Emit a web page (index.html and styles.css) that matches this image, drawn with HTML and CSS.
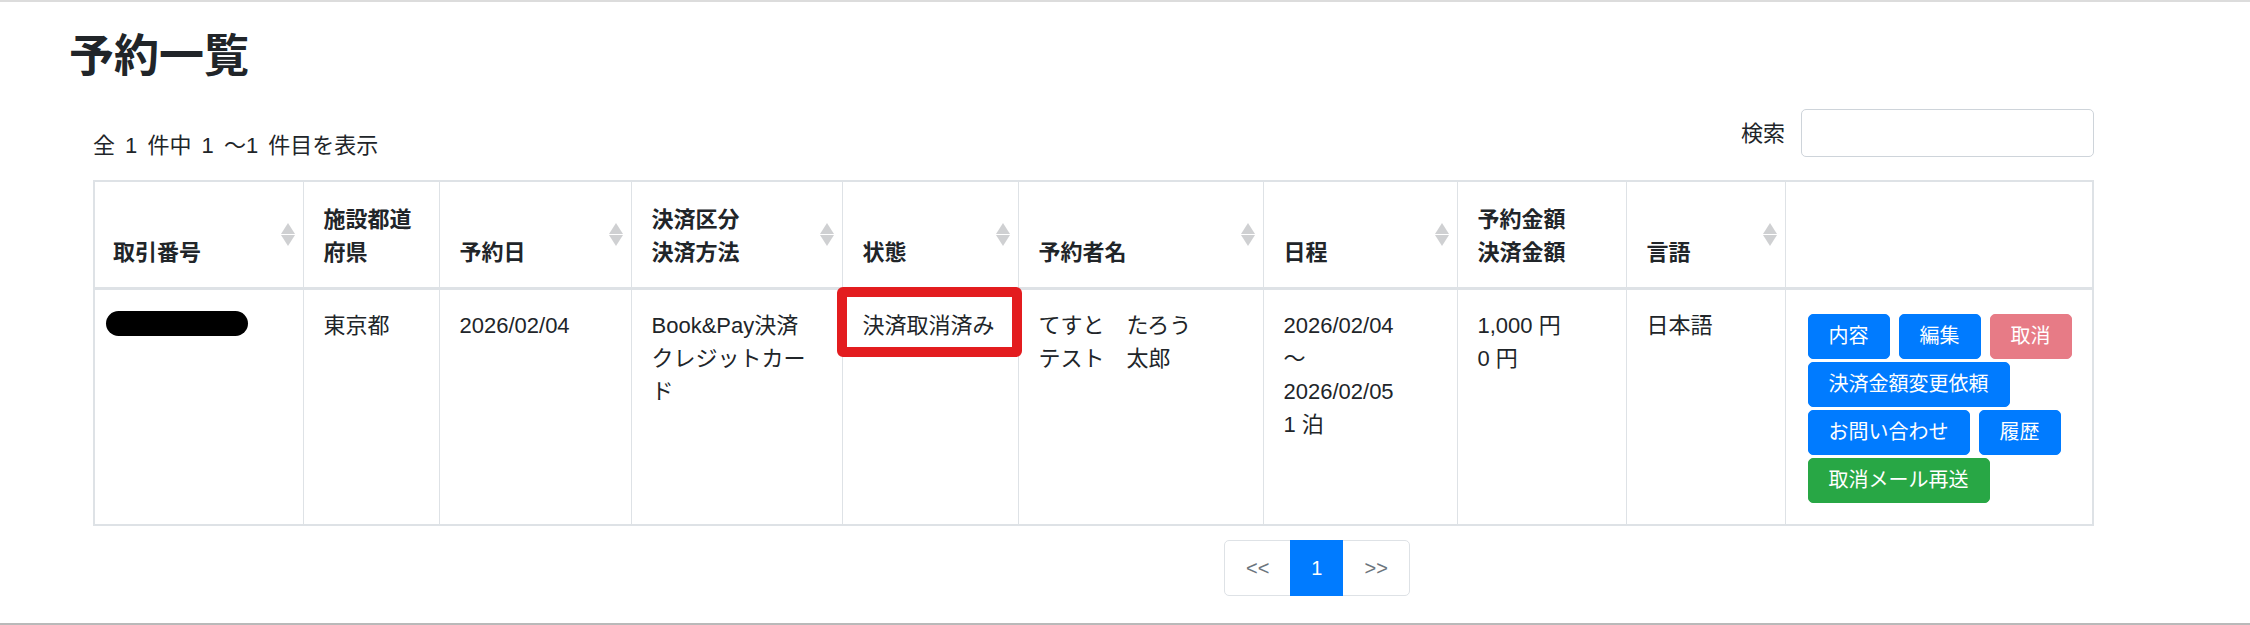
FILE: index.html
```html
<!DOCTYPE html>
<html lang="ja">
<head>
    <meta charset="UTF-8">
    <meta name="viewport" content="width=device-width, initial-scale=1.0">
    <title>予約一覧</title>
    <link rel="stylesheet" href="styles.css">
</head>
<body>

    <div class="page">
        <h2 class="page_title">予約一覧</h2>

        <div class="dt_wrap">
            <div class="dt_top">
                <div class="dt_info">全 1 件中 1 ～1 件目を表示</div>
                <label class="dt_search">検索<input type="search" class="search_input"></label>
            </div>

            <table class="res_table">
                <colgroup>
                    <col class="c1"><col class="c2"><col class="c3"><col class="c4"><col class="c5">
                    <col class="c6"><col class="c7"><col class="c8"><col class="c9"><col class="c10">
                </colgroup>
                <thead>
                    <tr>
                        <th class="sorting first">取引番号</th>
                        <th>施設都道府県</th>
                        <th class="sorting">予約日</th>
                        <th class="sorting">決済区分<br>決済方法</th>
                        <th class="sorting">状態</th>
                        <th class="sorting">予約者名</th>
                        <th class="sorting">日程</th>
                        <th>予約金額<br>決済金額</th>
                        <th class="sorting">言語</th>
                        <th></th>
                    </tr>
                </thead>
                <tbody>
                    <tr>
                        <td class="first"><span class="masked"></span></td>
                        <td>東京都</td>
                        <td>2026/02/04</td>
                        <td>Book&amp;Pay決済<br>クレジットカー<br>ド</td>
                        <td class="status_cell">決済取消済み<span class="mark_box"></span></td>
                        <td>てすと　たろう<br>テスト　太郎</td>
                        <td>2026/02/04<br>～<br>2026/02/05<br>1 泊</td>
                        <td>1,000 円<br>0 円</td>
                        <td>日本語</td>
                        <td>
                            <div class="actions">
                                <button class="btn btn_blue">内容</button>
                                <button class="btn btn_blue">編集</button>
                                <button class="btn btn_red" disabled>取消</button>
                                <button class="btn btn_blue">決済金額変更依頼</button>
                                <button class="btn btn_blue">お問い合わせ</button>
                                <button class="btn btn_blue">履歴</button>
                                <button class="btn btn_green">取消メール再送</button>
                            </div>
                        </td>
                    </tr>
                </tbody>
            </table>

            <div class="dt_bottom">
                <ul class="pager">
                    <li class="pg_item disabled"><span class="pg_link pg_arrow">&lt;&lt;</span></li>
                    <li class="pg_item active"><span class="pg_link">1</span></li>
                    <li class="pg_item disabled"><span class="pg_link pg_arrow">&gt;&gt;</span></li>
                </ul>
            </div>
        </div>
    </div>

</body>
</html>
```

FILE: styles.css
```css
body{
    margin: 0;
    padding: 0;
    font-family: "Liberation Sans", "Noto Sans CJK JP", sans-serif;
    color: #212529;
    background-color: #fff;
    overflow: hidden;
}

.page{
    height: 625px;
    box-sizing: border-box;
    border-top: 2px solid #dcdcdc;
    border-bottom: 2px solid #b9b9b9;
    padding: 28px 0 0 69px;
}

.page_title{
    margin: 0;
    font-size: 45px;
    line-height: 1.2;
    font-weight: bold;
}

.dt_wrap{
    margin-left: 24px;
    width: 2001px;
    font-size: 22px;
    line-height: 1.5;
}

/* info + search */
.dt_top{
    display: flex;
    justify-content: space-between;
    margin-top: 25px;
    height: 48px;
}
.dt_info{
    margin-top: 20px;
    word-spacing: 4px;
}
.dt_search{
    display: flex;
    align-items: center;
    gap: 16px;
}
.search_input{
    width: 293px;
    height: 48px;
    box-sizing: border-box;
    border: 1px solid #ced4da;
    border-radius: 5px;
    outline: none;
    font-size: 20px;
    padding: 0 10px;
}

/* table */
.res_table{
    margin-top: 23px;
    width: 1999px;
    table-layout: fixed;
    border-collapse: collapse;
    border: 2px solid #dee2e6;
}
.c1{ width: 209px; }
.c2{ width: 136px; }
.c3{ width: 192px; }
.c4{ width: 211px; }
.c5{ width: 176px; }
.c6{ width: 245px; }
.c7{ width: 194px; }
.c8{ width: 169px; }
.c9{ width: 159px; }
.c10{ width: 308px; }

.res_table th,
.res_table td{
    border: 1px solid #dee2e6;
    text-align: left;
}
.res_table th{
    vertical-align: bottom;
    padding: 21px 16px 18px 20px;
    border-bottom: 3px solid #dee2e6;
    font-weight: bold;
    position: relative;
}
.res_table td{
    vertical-align: top;
    padding: 19px 16px 18px 20px;
}
.res_table .first{
    padding-left: 18px;
}

/* sort arrows */
.sorting{
    padding-right: 30px !important;
}
.sorting::before,
.sorting::after{
    content: "";
    position: absolute;
    right: 8px;
    width: 0;
    height: 0;
    border-left: 7px solid transparent;
    border-right: 7px solid transparent;
}
.sorting::before{
    top: 41px;
    border-bottom: 11px solid #cfd0d2;
}
.sorting::after{
    top: 53px;
    border-top: 11px solid #cfd0d2;
}

.masked{
    display: block;
    width: 142px;
    height: 25px;
    margin: 2px 0 0 -7px;
    background-color: #000;
    border-radius: 13px;
}

.status_cell{
    position: relative;
}
.mark_box{
    position: absolute;
    left: -6px;
    top: -3px;
    width: 185px;
    height: 70px;
    box-sizing: border-box;
    border: 10px solid #e31c1f;
    border-radius: 6px;
}

/* buttons */
.actions{
    display: flex;
    flex-wrap: wrap;
    gap: 3px 9px;
    padding: 5px 0 3px 2px;
}
.btn{
    border: 1px solid;
    border-radius: 5px;
    padding: 7px 20px;
    font-family: "Liberation Sans", "Noto Sans CJK JP", sans-serif;
    font-size: 20px;
    line-height: 29px;
    color: #fff;
    cursor: pointer;
}
.btn_blue{
    background-color: #007bff;
    border-color: #007bff;
}
.btn_red{
    background-color: #e77b86;
    border-color: #e77b86;
}
.btn_green{
    background-color: #28a745;
    border-color: #28a745;
}

/* pagination */
.dt_bottom{
    display: flex;
    padding-left: 1131px;
    margin-top: 14px;
}
.pager{
    display: flex;
    list-style: none;
    margin: 0;
    padding: 0;
}
.pg_link{
    display: block;
    height: 56px;
    box-sizing: border-box;
    padding: 0 20px;
    line-height: 54px;
    font-size: 20px;
    border: 1px solid #dee2e6;
    margin-left: -1px;
    color: #6c757d;
    background-color: #fff;
}
.pg_arrow{
    padding: 0 21px;
}
.pg_item:first-child .pg_link{
    margin-left: 0;
    border-radius: 5px 0 0 5px;
}
.pg_item:last-child .pg_link{
    border-radius: 0 5px 5px 0;
}
.pg_item.active .pg_link{
    background-color: #007bff;
    border-color: #007bff;
    color: #fff;
    position: relative;
}
```
